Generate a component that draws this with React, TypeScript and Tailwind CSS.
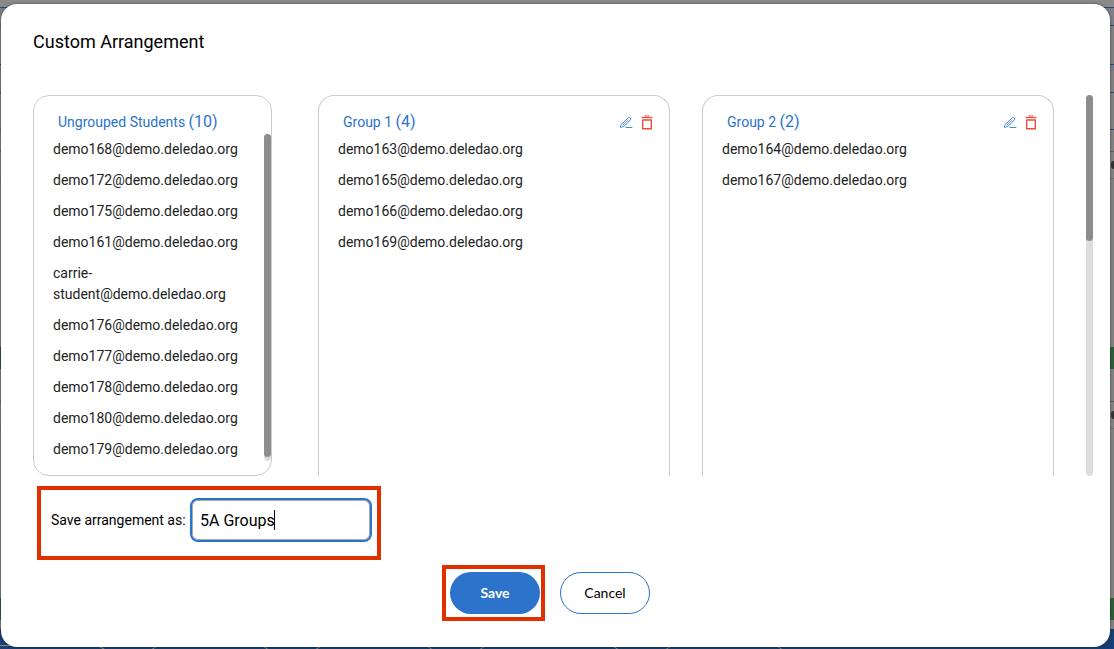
import { useState } from "react";

const ungrouped = [
  "demo168@demo.deledao.org",
  "demo172@demo.deledao.org",
  "demo175@demo.deledao.org",
  "demo161@demo.deledao.org",
  "carrie-student@demo.deledao.org",
  "demo176@demo.deledao.org",
  "demo177@demo.deledao.org",
  "demo178@demo.deledao.org",
  "demo180@demo.deledao.org",
  "demo179@demo.deledao.org",
];

const groups = [
  {
    name: "Group 1",
    students: [
      "demo163@demo.deledao.org",
      "demo165@demo.deledao.org",
      "demo166@demo.deledao.org",
      "demo169@demo.deledao.org",
    ],
  },
  {
    name: "Group 2",
    students: ["demo164@demo.deledao.org", "demo167@demo.deledao.org"],
  },
];

function EditIcon() {
  return (
    <svg width="14" height="14" viewBox="0 0 14 14" fill="none" stroke="#4a8ae0" aria-hidden="true">
      <path d="M1.3 12.4l.8-3 7.3-6.6c.5-.5 1.2-.5 1.7 0l.4.4c.5.5.5 1.2 0 1.7l-6.9 6.7z" strokeLinejoin="round" />
      <path d="M3.8 10.2l5-4.6" strokeWidth="0.7" strokeLinecap="round" />
      <path d="M7 12.5h6" strokeLinecap="round" />
    </svg>
  );
}

function TrashIcon() {
  return (
    <svg width="12" height="15" viewBox="0 0 12 15" fill="none" stroke="#ee4b40" aria-hidden="true">
      <path d="M3.5 1h5" strokeWidth="1" />
      <path d="M.5 2.5h11" strokeWidth="1.2" />
      <path d="M1.7 5h8.6v8.7H1.7z" strokeWidth="1.4" />
    </svg>
  );
}

function StudentList({ students }: { students: string[] }) {
  return (
    <ul className="min-w-0 flex-1 pl-[19px] pr-5 text-sm leading-[21px] text-[#222]">
      {students.map((email) => (
        <li key={email} className="py-[5px]">
          {email}
        </li>
      ))}
    </ul>
  );
}

function PanelTitle({ name, count }: { name: string; count: number }) {
  return (
    <h2 className="text-sm leading-6 text-[#2b73cb]">
      {name} <span className="text-base leading-6">({count})</span>
    </h2>
  );
}

/* The dimmed page that shows around the dialog */
function Backdrop() {
  return (
    <div className="absolute inset-0 flex flex-col overflow-hidden bg-[#828282]" aria-hidden="true">
      <div className="h-2 shrink-0 border-b border-[#224a80] bg-[#8a8a8a]" />
      <div className="h-[18px] shrink-0 border-b border-[#224a80] bg-[#7b8089]" />
      <div className="h-[39px] shrink-0 border-b border-[#224a80]" />
      <div className="h-[6px] shrink-0 bg-[#777c8b]" />
      <div className="h-[22px] shrink-0 border-b border-[#224a80]" />
      <div className="h-[37px] shrink-0 border-b border-[#224a80]" />
      <div className="h-[22px] shrink-0 border-b border-[#606060]" />
      <div className="flex h-[27px] shrink-0 items-center justify-end border-b border-[#707070]">
        <div className="h-2 w-[3px] rounded-l-full bg-[#333]" />
      </div>
      <div className="h-[168px] shrink-0" />
      <div className="h-[22px] shrink-0 bg-[#2c5c39]" />
      <div className="h-[33px] shrink-0 border-b border-[#5a5a5a]" />
      <div className="flex h-[27px] shrink-0 items-center justify-end border-b border-[#707070]">
        <div className="h-2 w-[3px] rounded-l-full bg-[#333]" />
      </div>
      <div className="h-[169px] shrink-0" />
      <div className="h-[22px] shrink-0 bg-[#2c5c39]" />
      <div className="h-[9px] shrink-0" />
      <div className="flex min-h-5 flex-1 gap-9 overflow-hidden bg-[#153f75] pt-4">
        <div className="h-8 w-[110px] rounded-tr-2xl border-t border-r border-[#8b8b8b]" />
        <div className="h-8 w-32 rounded-t-2xl border border-[#8b8b8b]" />
        <div className="h-8 w-32 rounded-t-2xl border border-[#8b8b8b]" />
        <div className="h-8 w-[150px] rounded-t-2xl border border-[#8b8b8b]" />
        <div className="h-8 w-32 rounded-t-2xl border border-[#8b8b8b]" />
      </div>
    </div>
  );
}

export default function App() {
  const [name, setName] = useState("5A Groups");
  const [touched, setTouched] = useState(false);

  return (
    <div className="relative flex min-h-screen flex-col pt-1 pr-1 pb-0.5 pl-px font-['Roboto',sans-serif] text-black">
      <Backdrop />

      <div
        role="dialog"
        aria-labelledby="dialog-title"
        className="relative flex-1 rounded-2xl bg-white pt-6 pr-[17px] pb-6 pl-8 shadow-[0_0_3px_rgba(0,0,0,0.5)]"
      >
        <h1 id="dialog-title" className="text-lg leading-7">
          Custom Arrangement
        </h1>

        <div className="mt-[39px] flex gap-[46px]">
          {/* Ungrouped */}
          <section className="w-[239px] shrink-0 rounded-2xl border border-[#ccc] pt-3.5 pb-2.5">
            <div className="pl-6">
              <PanelTitle name="Ungrouped Students" count={ungrouped.length} />
            </div>
            <div className="flex">
              <StudentList students={ungrouped} />
              <div className="mb-1 w-[7px] rounded-full bg-[#ddd] pb-1">
                <div className="h-full rounded-full bg-[#8d8d8d]" />
              </div>
            </div>
          </section>

          {/* Groups */}
          <div className="flex min-w-0 flex-1">
            <div className="mr-8 grid flex-1 grid-cols-2 gap-8">
              {groups.map((group) => (
                <section key={group.name} className="rounded-t-2xl border border-b-0 border-[#ccc] pt-3.5">
                  <div className="flex items-center justify-between pr-4 pl-6">
                    <PanelTitle name={group.name} count={group.students.length} />
                    <div className="flex items-center gap-2">
                      <button type="button" aria-label={`Rename ${group.name}`}>
                        <EditIcon />
                      </button>
                      <button type="button" aria-label={`Delete ${group.name}`}>
                        <TrashIcon />
                      </button>
                    </div>
                  </div>
                  <StudentList students={group.students} />
                </section>
              ))}
            </div>
            <div className="w-[7px] rounded-full bg-[#ddd]">
              <div className="h-[146px] rounded-full bg-[#8d8d8d]" />
            </div>
          </div>
        </div>

        <form onSubmit={(e) => e.preventDefault()}>
          <div className="mt-2.5 ml-1 flex w-[344px] items-center justify-between border-4 border-[#e22f00] pt-2 pr-[5px] pb-3.5 pl-2.5">
            <label htmlFor="arrangement-name" className="text-sm whitespace-nowrap">
              Save arrangement as:
            </label>
            <div className="relative">
              <input
                id="arrangement-name"
                type="text"
                value={name}
                onChange={(e) => setName(e.target.value)}
                onFocus={() => setTouched(true)}
                className="block h-11 w-[182px] rounded-lg border-2 border-[#2b73cb] px-2 text-base shadow-[inset_0_0_0_1px_#aaa] outline-none"
              />
              {!touched && <span className="absolute top-3 left-[84px] h-5 w-px bg-black" />}
            </div>
          </div>

          <div className="mt-[5px] flex items-center justify-center gap-[15px] pr-[34px] font-['Lato',sans-serif] text-sm">
            <div className="border-4 border-[#e22f00] py-[3px] pr-px pl-1">
              <button type="submit" className="block h-[42px] w-[90px] rounded-full bg-[#2b73cb] font-bold text-white">
                Save
              </button>
            </div>
            <button type="button" className="h-[42px] w-[90px] rounded-full border border-[#2b73cb]">
              Cancel
            </button>
          </div>
        </form>
      </div>
    </div>
  );
}
